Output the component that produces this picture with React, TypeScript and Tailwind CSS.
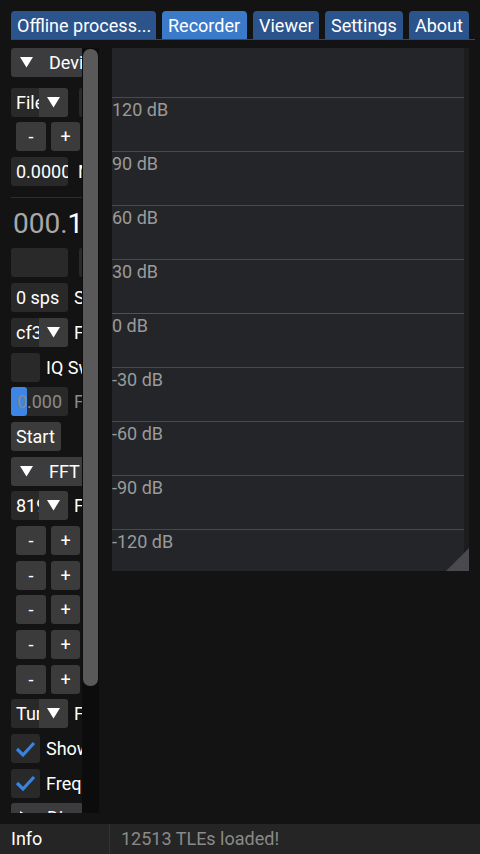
import type { ReactNode } from "react"

const tabs = [
  { label: "Offline process...", w: "w-[145px]", active: false },
  { label: "Recorder", w: "w-[85px]", active: true },
  { label: "Viewer", w: "w-[66px]", active: false },
  { label: "Settings", w: "w-[78px]", active: false },
  { label: "About", w: "w-[60px]", active: false },
]

const dbLabels = ["120 dB", "90 dB", "60 dB", "30 dB", "0 dB", "-30 dB", "-60 dB", "-90 dB", "-120 dB"]

function TriDown() {
  return (
    <svg width="13" height="11" viewBox="0 0 13 11" className="shrink-0">
      <polygon points="0,0 13,0 6.5,10.5" fill="#ffffff" />
    </svg>
  )
}

function TriRight() {
  return (
    <svg width="11" height="13" viewBox="0 0 11 13" className="shrink-0">
      <polygon points="0,0 10.5,6.5 0,13" fill="#ffffff" />
    </svg>
  )
}

function Header({ label, open = true }: { label: string; open?: boolean }) {
  return (
    <div className="flex h-[29px] w-[200px] shrink-0 items-center rounded-[3px] bg-[#3c3c3e] pl-[9px]">
      {open ? <TriDown /> : <TriRight />}
      <span className="ml-[16px] whitespace-nowrap">{label}</span>
    </div>
  )
}

function Combo({ text, children }: { text: string; children?: ReactNode }) {
  return (
    <div className="flex h-[29px] w-[300px] shrink-0 items-center">
      <div className="flex h-full w-[57px] overflow-hidden rounded-[3px]">
        <div className="w-[28px] overflow-hidden whitespace-nowrap bg-[#292929] pl-[5px] leading-[29px]">{text}</div>
        <div className="flex w-[29px] items-center justify-center bg-[#3b3b3b]">
          <TriDown />
        </div>
      </div>
      {children}
    </div>
  )
}

function Frame({ text, children, dim }: { text?: string; children?: ReactNode; dim?: boolean }) {
  return (
    <div className="flex h-[29px] w-[300px] shrink-0 items-center">
      <div
        className={`h-full w-[57px] overflow-hidden whitespace-nowrap rounded-[3px] bg-[#292929] pl-[5px] leading-[29px] ${
          dim ? "text-[#8a8a8a]" : "text-white"
        }`}
      >
        {text}
      </div>
      {children}
    </div>
  )
}

function PlusMinus() {
  return (
    <div className="flex h-[29px] shrink-0 gap-[5px] pl-[5px]">
      <div className="flex w-[30px] items-center justify-center rounded-[3px] bg-[#3b3b3b]">-</div>
      <div className="flex w-[29px] items-center justify-center rounded-[3px] bg-[#3b3b3b]">+</div>
    </div>
  )
}

function Check({ checked, label }: { checked: boolean; label: string }) {
  return (
    <div className="flex h-[29px] w-[300px] shrink-0 items-center">
      <div className="flex h-[29px] w-[29px] items-center justify-center rounded-[3px] bg-[#292929]">
        {checked && (
          <svg width="21" height="18" viewBox="0 0 21 18">
            <polyline points="2,9 8,15 19,3" fill="none" stroke="#3a82dc" strokeWidth="3.2" />
          </svg>
        )}
      </div>
      <span className="ml-[6px] whitespace-nowrap">{label}</span>
    </div>
  )
}

function Label({ children, dim }: { children: ReactNode; dim?: boolean }) {
  return <span className={`ml-[6px] whitespace-nowrap ${dim ? "text-[#8a8a8a]" : "text-white"}`}>{children}</span>
}

function LeftPanel() {
  return (
    <div className="flex h-[765px] w-[99px] shrink-0">
      <div className="flex h-full w-[82px] flex-col gap-[5.7px] overflow-hidden pl-[11px]">
        <Header label="Device" />
        <div className="mt-[5px]">
          <Combo text="File">
            <div className="ml-[11px] h-full w-[80px] rounded-[3px] bg-[#292929]" />
          </Combo>
        </div>
        <PlusMinus />
        <Frame text="0.000000">
          <span className="ml-[10px] whitespace-nowrap">MHz</span>
        </Frame>

        {/* frequency readout */}
        <div className="h-[51px] shrink-0 pt-[5px]">
          <div className="h-[1px] w-[200px] bg-[#2e2e2e]" />
          <div className="h-[45px] whitespace-nowrap pl-[2px] pt-[6px] text-[28px] leading-[39px]">
            <span className="text-[#a8a8a8]">000.</span>100.000
          </div>
        </div>

        <Frame>
          <div className="ml-[11px] h-full w-[80px] rounded-[3px] bg-[#292929]" />
        </Frame>
        <Frame text="0 sps">
          <Label>Samplerate</Label>
        </Frame>
        <Combo text="cf32">
          <Label>Format</Label>
        </Combo>
        <Check checked={false} label="IQ Swap" />
        <div className="flex h-[29px] w-[300px] shrink-0 items-center">
          <div className="relative h-full w-[57px] rounded-[3px] bg-[#292929] text-center leading-[29px] text-[#8a8a8a]">
            <div className="absolute left-0 top-0 h-full w-[16px] rounded-[3px] bg-[#3d85e6]" />
            <span className="relative">0.000</span>
          </div>
          <Label dim>Freq</Label>
        </div>
        <div className="h-[29px] w-[50px] shrink-0 rounded-[3px] bg-[#3b3b3b] pl-[5px] leading-[29px]">Start</div>

        <Header label="FFT" />
        <Combo text="8192">
          <Label>FFT Size</Label>
        </Combo>
        <PlusMinus />
        <PlusMinus />
        <PlusMinus />
        <PlusMinus />
        <PlusMinus />
        <Combo text="Turbo">
          <Label>FFT Rate</Label>
        </Combo>
        <Check checked label="Show Waterfall" />
        <Check checked label="Frequency" />
        <Header label="Display" open={false} />
      </div>

      {/* scrollbar */}
      <div className="h-full w-[17px] bg-[#0c0c0c] px-[1px] pt-[1px]">
        <div className="h-[637px] rounded-[7px] bg-[#595959]" />
      </div>
    </div>
  )
}

function PlotWindow() {
  return (
    <div className="relative ml-[13px] flex h-[523px] w-[357px] shrink-0 bg-[#1d1d1f]">
      <div className="flex h-full w-[352px] flex-col overflow-hidden bg-[#242528]">
        <div className="h-[49px] shrink-0" />
        {dbLabels.map((l, i) => (
          <div
            key={l}
            className={`h-[54px] shrink-0 border-t pt-[2px] leading-[20px] text-[#9a9a9a] ${
              i === 4 ? "border-[#3b5a5a]" : "border-[#4a4a4a]"
            }`}
          >
            {l}
          </div>
        ))}
      </div>
      {/* resize grip */}
      <svg className="absolute bottom-0 right-0" width="23" height="23" viewBox="0 0 23 23">
        <polygon points="23,0 23,23 0,23" fill="#4a4a4e" />
      </svg>
    </div>
  )
}

export default function App() {
  return (
    <div className="flex h-[854px] w-[480px] flex-col overflow-hidden bg-[#131313] font-[Roboto,sans-serif] text-[18px] text-white">
      {/* Tabs */}
      <div className="flex h-[40px] shrink-0 flex-col">
        <div className="flex h-[39px] gap-[6px] pl-[11px] pt-[11px]">
          {tabs.map((t) => (
            <div
              key={t.label}
              className={`h-[28px] ${t.w} whitespace-nowrap rounded-t-[4px] pl-[6px] pt-[1px] leading-[27px] ${
                t.active ? "bg-[#3b7ac8]" : "bg-[#2c548c]"
              }`}
            >
              {t.label}
            </div>
          ))}
        </div>
        <div className="ml-[11px] mr-[5px] h-[1px] bg-[#2a4a78]" />
      </div>

      {/* Content */}
      <div className="flex h-[784px] shrink-0 pt-[8px]">
        <LeftPanel />
        <PlotWindow />
      </div>

      {/* Status bar */}
      <div className="flex h-[30px] shrink-0 bg-[#252525] leading-[30px]">
        <div className="w-[110px] border-r border-[#333333] pl-[11px]">Info</div>
        <div className="pl-[11px] text-[#8a8a8a]">12513 TLEs loaded!</div>
      </div>
    </div>
  )
}
